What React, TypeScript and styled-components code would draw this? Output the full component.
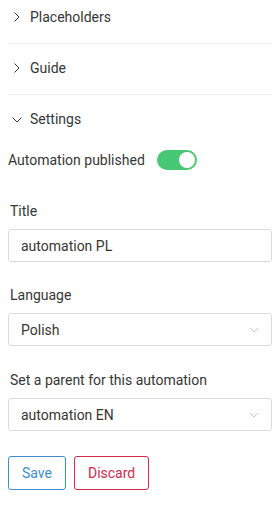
import React, { useState } from "react";
import styled, { createGlobalStyle } from "styled-components";

const Global = createGlobalStyle`
  html, body { margin: 0; padding: 0; background: #fff; }
  body { font-family: Roboto, "Noto Sans", sans-serif; color: #363636; font-size: 14px; }
  * { box-sizing: border-box; }
`;

const Page = styled.div`
  padding: 0 8px;
  width: 280px;
`;

const Item = styled.div<{ $first?: boolean; $last?: boolean }>`
  padding-top: ${(p) => (p.$first ? 0 : 7)}px;
  padding-bottom: ${(p) => (p.$last ? 0 : 9)}px;
  border-bottom: ${(p) => (p.$last ? "none" : "1px solid #ededed")};
`;

const Header = styled.div`
  height: 34px;
  display: flex;
  align-items: center;
  gap: 8px;
  padding-left: 4px;
  font-size: 14px;
  color: #363636;
`;

const ChevronBox = styled.span`
  width: 10px;
  height: 10px;
  display: inline-flex;
  align-items: center;
  justify-content: center;
`;

const Content = styled.div`
  display: flex;
  flex-direction: column;
  padding-top: 14px;
`;

const ToggleRow = styled.div`
  display: flex;
  align-items: center;
  gap: 12px;
  height: 20px;
`;

const Track = styled.button<{ $on: boolean }>`
  width: 40px;
  height: 20px;
  border-radius: 10px;
  border: none;
  padding: 2px;
  background: ${(p) => (p.$on ? "#48c774" : "#b5b5b5")};
  display: flex;
  justify-content: ${(p) => (p.$on ? "flex-end" : "flex-start")};
  cursor: pointer;
`;

const Knob = styled.span`
  width: 16px;
  height: 16px;
  border-radius: 50%;
  background: #fff;
`;

const Field = styled.div<{ $gap: number }>`
  display: flex;
  flex-direction: column;
  margin-top: ${(p) => p.$gap}px;
`;

const Label = styled.label`
  font-size: 14px;
  color: #363636;
  padding-left: 2px;
  line-height: 20px;
  margin-bottom: 8px;
`;

const Input = styled.input`
  height: 33px;
  width: 100%;
  border: 1px solid #dbdbdb;
  border-radius: 3px;
  padding: 0 12px;
  font-family: Roboto, sans-serif;
  font-size: 14px;
  color: #363636;
  outline: none;
`;

const SelectBox = styled.div`
  height: 33px;
  border: 1px solid #dbdbdb;
  border-radius: 3px;
  padding: 0 12px;
  display: flex;
  align-items: center;
  justify-content: space-between;
  font-size: 14px;
  color: #363636;
`;

const Buttons = styled.div`
  display: flex;
  gap: 8px;
  margin-top: 25px;
`;

const Btn = styled.button<{ $color: string }>`
  height: 34px;
  padding: 0 13px;
  background: #fff;
  border: 1px solid ${(p) => p.$color};
  color: ${(p) => p.$color};
  border-radius: 3px;
  font-family: Roboto, sans-serif;
  font-size: 14px;
  cursor: pointer;
`;

const Right = () => (
  <svg width="10" height="12" viewBox="0 0 10 12">
    <path d="M2.5 1.5 L7 6 L2.5 10.5" fill="none" stroke="#363636" strokeWidth="1" />
  </svg>
);
const Down = () => (
  <svg width="10" height="10" viewBox="0 0 10 10">
    <path d="M0.5 3.5 L5 8 L9.5 3.5" fill="none" stroke="#363636" strokeWidth="1" />
  </svg>
);
const SelChevron = () => (
  <svg width="10" height="6" viewBox="0 0 10 6">
    <path d="M1 1 L5 5 L9 1" fill="none" stroke="#c8c8c8" strokeWidth="1" />
  </svg>
);

export default function App() {
  const [on, setOn] = useState(true);
  return (
    <Page>
      <Global />
      <Item $first>
        <Header>
          <ChevronBox><Right /></ChevronBox>Placeholders
        </Header>
      </Item>
      <Item>
        <Header>
          <ChevronBox><Right /></ChevronBox>Guide
        </Header>
      </Item>
      <Item $last>
        <Header>
          <ChevronBox><Down /></ChevronBox>Settings
        </Header>
        <Content>
          <ToggleRow>
            <span>Automation published</span>
            <Track $on={on} onClick={() => setOn(!on)}>
              <Knob />
            </Track>
          </ToggleRow>
          <Field $gap={31}>
            <Label>Title</Label>
            <Input defaultValue="automation PL" />
          </Field>
          <Field $gap={23}>
            <Label>Language</Label>
            <SelectBox>
              <span>Polish</span>
              <SelChevron />
            </SelectBox>
          </Field>
          <Field $gap={24}>
            <Label>Set a parent for this automation</Label>
            <SelectBox>
              <span>automation EN</span>
              <SelChevron />
            </SelectBox>
          </Field>
          <Buttons>
            <Btn $color="#3e8ed0">Save</Btn>
            <Btn $color="#d6294c">Discard</Btn>
          </Buttons>
        </Content>
      </Item>
    </Page>
  );
}
